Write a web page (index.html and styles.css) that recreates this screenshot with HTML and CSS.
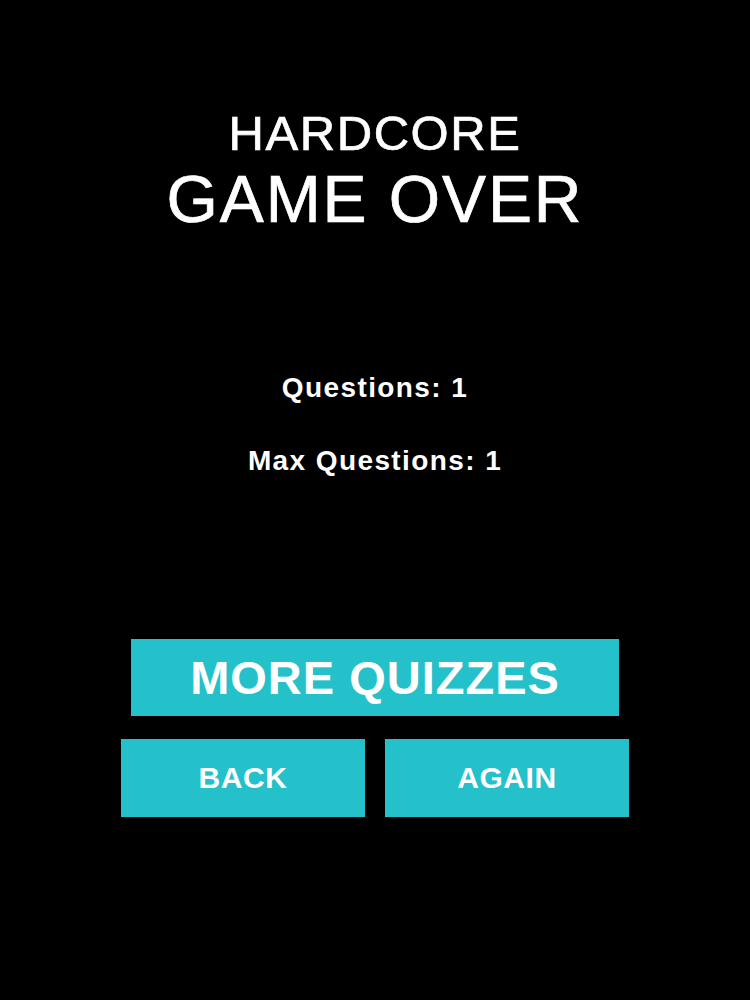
FILE: index.html
```html
<!DOCTYPE html>
<html lang="en">
<head>
  <meta charset="UTF-8">
  <meta name="viewport" content="width=device-width, initial-scale=1.0">
  <title>Game Over</title>
  <link rel="stylesheet" href="styles.css">
</head>
<body>
  <main class="screen">
    <header class="title">
      <div class="mode">HARDCORE</div>
      <h1>GAME OVER</h1>
    </header>

    <section class="stats">
      <div class="stat">Questions: 1</div>
      <div class="stat">Max Questions: 1</div>
    </section>

    <section class="actions">
      <button class="btn btn-wide">MORE QUIZZES</button>
      <div class="btn-row">
        <button class="btn btn-half">BACK</button>
        <button class="btn btn-half">AGAIN</button>
      </div>
    </section>
  </main>
</body>
</html>
```

FILE: styles.css
```css
html, body {
  margin: 0;
  padding: 0;
  background-color: #000;
}

body {
  font-family: "Liberation Sans", Arial, Helvetica, sans-serif;
  color: #fff;
  width: 750px;
  height: 1000px;
}

.screen {
  display: flex;
  flex-direction: column;
  align-items: center;
  padding-top: 105px;
}

.title {
  text-align: center;
  -webkit-text-stroke: 0.7px #fff;
}

.mode {
  font-size: 49px;
  line-height: 56px;
  letter-spacing: 1.6px;
}

.title h1 {
  margin: 0;
  font-size: 66px;
  font-weight: normal;
  line-height: 76px;
  letter-spacing: 1.9px;
}

.stats {
  margin-top: 135px;
  display: flex;
  flex-direction: column;
  align-items: center;
  gap: 41px;
}

.stat {
  font-size: 28px;
  font-weight: bold;
  line-height: 32px;
  letter-spacing: 1.4px;
}

.actions {
  margin-top: 162px;
  display: flex;
  flex-direction: column;
  align-items: center;
  gap: 23px;
}

.btn {
  font-family: inherit;
  font-weight: bold;
  color: #fff;
  background-color: #25c1ca;
  border: none;
  border-radius: 0;
  padding: 0;
  cursor: pointer;
}

.btn-wide {
  width: 488px;
  height: 77px;
  font-size: 47px;
  letter-spacing: 1px;
}

.btn-row {
  display: flex;
  gap: 20px;
}

.btn-half {
  width: 244px;
  height: 78px;
  font-size: 30px;
  letter-spacing: 0.6px;
}
```
